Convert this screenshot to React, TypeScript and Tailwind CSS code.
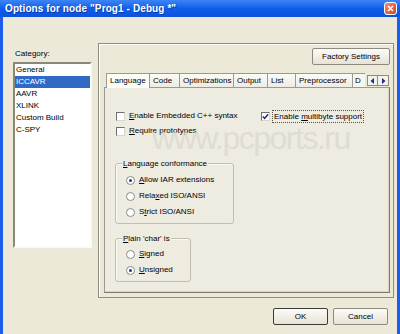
import React from 'react';

const categories = ['General', 'ICCAVR', 'AAVR', 'XLINK', 'Custom Build', 'C-SPY'];
const tabs = [
  { name: 'Language', w: 'w-[44px]' },
  { name: 'Code', w: 'w-[30px]' },
  { name: 'Optimizations', w: 'w-[54px]' },
  { name: 'Output', w: 'w-[34px]' },
  { name: 'List', w: 'w-[28px]' },
  { name: 'Preprocessor', w: 'w-[57px]' },
];

// label with underlined accelerator key
function Acc({ text, at }: { text: string; at: number }) {
  return (
    <span className="whitespace-nowrap">
      {text.slice(0, at)}
      <span className="underline underline-offset-1">{text[at]}</span>
      {text.slice(at + 1)}
    </span>
  );
}

function CheckBox({ checked = false }: { checked?: boolean }) {
  return (
    <span className="w-[9px] h-[9px] shrink-0 border border-t-[#6f6f6f] border-l-[#6f6f6f] border-b-[#d8d6cc] border-r-[#d8d6cc] bg-white flex items-center justify-center">
      {checked && (
        <svg width="7" height="7" viewBox="0 0 7 7">
          <path d="M0.8 3.4 L2.6 5.3 L6.2 1.2" stroke="#1b2d8a" strokeWidth="1.5" fill="none" />
        </svg>
      )}
    </span>
  );
}

function Radio({ checked = false }: { checked?: boolean }) {
  return (
    <span className="w-[9px] h-[9px] shrink-0 rounded-full border border-[#8c8a80] bg-white flex items-center justify-center">
      {checked && <span className="w-[3px] h-[3px] rounded-full bg-[#1c3a9c]" />}
    </span>
  );
}

function Button({ label, def = false, w }: { label: string; def?: boolean; w: string }) {
  return (
    <div
      className={`${w} h-[17px] flex items-center justify-center border rounded-[2px] bg-gradient-to-b from-[#fbfbf8] to-[#e6e3d6] ${
        def ? 'border-[#3b3b38]' : 'border-[#8d8b80]'
      }`}
    >
      <span className="text-[8px] leading-none text-black">{label}</span>
    </div>
  );
}

export default function App() {
  return (
    <div className="relative w-[400px] h-[334px] flex flex-col font-['Liberation_Sans',Arial,sans-serif] select-none">
      {/* Title bar */}
      <div className="h-[17px] shrink-0 flex items-center justify-between pl-[5px] pr-[3px] bg-gradient-to-b from-[#3c84f5] via-[#0f5ee9] to-[#0a53dc]">
        <span className="text-[10px] font-bold text-white leading-none tracking-[0.1px] [text-shadow:1px_1px_0_#0a3aa8]">
          Options for node "Prog1 - Debug *"
        </span>
        <div className="w-[13px] h-[13px] rounded-[3px] border border-white bg-gradient-to-br from-[#ef8a67] to-[#d6401b] flex items-center justify-center">
          <svg width="7" height="7" viewBox="0 0 7 7">
            <path d="M1 1 L6 6 M6 1 L1 6" stroke="white" strokeWidth="1.6" />
          </svg>
        </div>
      </div>

      {/* Body */}
      <div className="flex-1 flex flex-col border-x-[3px] border-[#1e5ceb] bg-[#ece9d8] pt-[26px] pl-[10px] pr-[3px] text-black">
        <div className="flex">
          {/* Category */}
          <div className="w-[79px] flex flex-col pt-[6px]">
            <span className="h-[10px] leading-[10px] text-[8px] pl-[2px]">Category:</span>
            <div className="mt-[3px] h-[186px] border-2 border-t-[#8a877c] border-l-[#8a877c] border-b-[#fafaf6] border-r-[#fafaf6] bg-white">
              {categories.map((c, i) => (
                <div
                  key={c}
                  className={`h-[12px] leading-[12px] text-[8px] pl-[1px] ${
                    i === 1 ? 'bg-[#316ac5] text-white' : ''
                  }`}
                >
                  {c}
                </div>
              ))}
            </div>
          </div>

          {/* Outer panel */}
          <div className="ml-[6px] w-[296px] h-[255px] flex flex-col border border-[#8f8c80] shadow-[inset_1px_1px_0_#ffffff]">
            <div className="flex justify-end pt-[4px] pr-[3px]">
              <Button label="Factory Settings" w="w-[78px]" />
            </div>

            <div className="flex-1 flex flex-col ml-[5px] mr-[3px] mb-[4px] mt-[7px]">
              {/* Tab strip */}
              <div className="h-[15px] flex items-end pl-[2px] relative z-10">
                {tabs.map((t, i) => (
                  <div
                    key={t.name}
                    className={`${t.w} shrink-0 flex items-center pl-[3px] text-[8px] leading-none border-r border-[#9a9a92] ${
                      i === 0
                        ? 'h-[15px] border-l border-t bg-[#fcfcf9] -mb-px'
                        : 'h-[14px] border-t bg-gradient-to-b from-[#fbfbf8] to-[#ecebe4]'
                    }`}
                  >
                    {t.name}
                  </div>
                ))}
                <div className="w-[12px] h-[14px] shrink-0 overflow-hidden pl-[2px] text-[8px] leading-[14px] border-t border-[#9a9a92] bg-[#f6f5f0]">
                  D
                </div>
                <div className="flex ml-auto mb-[1px] mr-[1px]">
                  <div className="w-[11px] h-[11px] border border-[#8d8b80] bg-[#f3f2ec] flex items-center justify-center">
                    <svg width="5" height="6" viewBox="0 0 5 6">
                      <path d="M4 0 L0.5 3 L4 6 Z" fill="#1c2f8a" />
                    </svg>
                  </div>
                  <div className="w-[11px] h-[11px] border border-l-0 border-[#8d8b80] bg-[#f3f2ec] flex items-center justify-center">
                    <svg width="5" height="6" viewBox="0 0 5 6">
                      <path d="M1 0 L4.5 3 L1 6 Z" fill="#1c2f8a" />
                    </svg>
                  </div>
                </div>
              </div>

              {/* Tab page */}
              <div className="flex-1 border border-[#9a9a92] border-b-[#7d7b72] border-r-[#7d7b72] bg-[#eeebe1] shadow-[inset_-1px_-1px_0_#d7d4c6] pt-[22px] pl-[11px] text-[8px]">
                <div className="flex items-center h-[12px]">
                  <div className="w-[145px] flex items-center gap-[4px]">
                    <CheckBox />
                    <Acc text="Enable Embedded C++ syntax" at={0} />
                  </div>
                  <div className="flex items-center gap-[3px]">
                    <CheckBox checked />
                    <span className="px-[1px] outline outline-1 outline-dotted outline-[#555] leading-[11px]">
                      <Acc text="Enable multibyte support" at={7} />
                    </span>
                  </div>
                </div>
                <div className="flex items-center gap-[4px] h-[12px] mt-[3px]">
                  <CheckBox />
                  <Acc text="Require prototypes" at={0} />
                </div>

                {/* Language conformance */}
                <div className="relative -ml-px mt-[26px] w-[119px] h-[61px] border border-[#c2bfae] rounded-[3px] shadow-[inset_1px_1px_0_#faf9f4] pt-[10px] pl-[10px] flex flex-col gap-[4px]">
                  <span className="absolute -top-[6px] left-[6px] px-[1px] leading-[11px] bg-[#eeebe1]">
                    <Acc text="Language conformance" at={0} />
                  </span>
                  <div className="flex items-center gap-[4px] h-[12px]">
                    <Radio checked />
                    <Acc text="Allow IAR extensions" at={0} />
                  </div>
                  <div className="flex items-center gap-[4px] h-[12px]">
                    <Radio />
                    <Acc text="Relaxed ISO/ANSI" at={4} />
                  </div>
                  <div className="flex items-center gap-[4px] h-[12px]">
                    <Radio />
                    <Acc text="Strict ISO/ANSI" at={1} />
                  </div>
                </div>

                {/* Plain char */}
                <div className="relative -ml-px mt-[14px] w-[76px] h-[44px] border border-[#c2bfae] rounded-[3px] shadow-[inset_1px_1px_0_#faf9f4] pt-[9px] pl-[10px] flex flex-col gap-[4px]">
                  <span className="absolute -top-[6px] left-[6px] px-[1px] leading-[11px] bg-[#eeebe1]">
                    <Acc text="Plain 'char' is" at={0} />
                  </span>
                  <div className="flex items-center gap-[4px] h-[12px]">
                    <Radio />
                    <Acc text="Signed" at={0} />
                  </div>
                  <div className="flex items-center gap-[4px] h-[12px]">
                    <Radio checked />
                    <Acc text="Unsigned" at={0} />
                  </div>
                </div>
              </div>
            </div>
          </div>
        </div>

        {/* Dialog buttons */}
        <div className="flex justify-end gap-[5px] mt-[10px] pr-[6px]">
          <Button label="OK" def w="w-[55px]" />
          <Button label="Cancel" w="w-[55px]" />
        </div>
      </div>

      {/* Watermark */}
      <div className="absolute left-[152px] top-[122px] pointer-events-none text-[32px] leading-[32px] tracking-[-1.5px] text-[#d9d7cf] opacity-70">
        www.pcports.ru
      </div>
    </div>
  );
}
